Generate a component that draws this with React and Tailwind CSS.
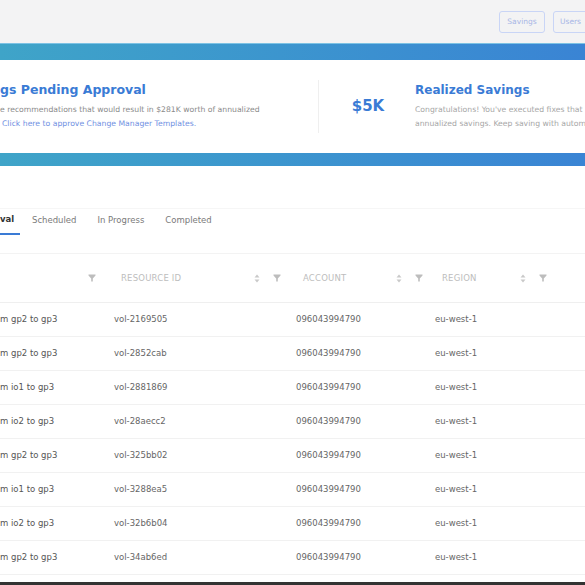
import React from "react";

const rows = [
  ["m gp2 to gp3", "vol-2169505"],
  ["m gp2 to gp3", "vol-2852cab"],
  ["m io1 to gp3", "vol-2881869"],
  ["m io2 to gp3", "vol-28aecc2"],
  ["m gp2 to gp3", "vol-325bb02"],
  ["m io1 to gp3", "vol-3288ea5"],
  ["m io2 to gp3", "vol-32b6b04"],
  ["m gp2 to gp3", "vol-34ab6ed"],
];

const SortIcon = () => (
  <svg width="6" height="9" viewBox="0 0 6 9" className="shrink-0">
    <path d="M3 0.5 L5.5 3.5 H0.5 Z" fill="#c9c9c9" />
    <path d="M3 8.5 L5.5 5.5 H0.5 Z" fill="#c9c9c9" />
  </svg>
);

const FilterIcon = () => (
  <svg width="8" height="8" viewBox="0 0 8 8" className="shrink-0">
    <path d="M0.5 0.5 H7.5 V1.6 L4.8 4.4 V7.5 H3.2 V4.4 L0.5 1.6 Z" fill="#bdbdbd" />
  </svg>
);

const HeaderCell = ({ label, width, sortAt, filterAt }) => (
  <div className={`flex items-center shrink-0 ${width}`}>
    <span className="pl-[7px] text-[8.5px] tracking-[0.2px] text-[#bdbdbd]">{label}</span>
    <div className={`${sortAt}`}><SortIcon /></div>
    <div className={`${filterAt}`}><FilterIcon /></div>
  </div>
);

export default function App() {
  return (
    <div className="w-[585px] h-[585px] overflow-hidden bg-white font-['DejaVu_Sans',sans-serif] flex flex-col">
      {/* top bar */}
      <div className="h-[43px] shrink-0 bg-[#f3f3f4] flex items-center pl-[499px] gap-[8px]">
        <div className="w-[46px] h-[22px] shrink-0 rounded-[3px] border border-[#c9d5f6] flex items-center justify-center text-[7.5px] text-[#a8b6e6]">
          Savings
        </div>
        <div className="w-[40px] h-[22px] shrink-0 rounded-[3px] border border-[#c9d5f6] flex items-center pl-[6px] text-[7.5px] text-[#a8b6e6]">
          Users
        </div>
      </div>

      {/* blue banner with card */}
      <div className="shrink-0 bg-gradient-to-r from-[#3fa4c8] to-[#3a84d4] border-t border-[#7cc2e4] pt-[16px] pb-[13px]">
        <div className="h-[93px] bg-white flex">
          <div className="w-[318px] shrink-0 pt-[23px]">
            <div className="text-[12.5px] font-semibold leading-[14px] text-[#3a7bd5]">gs Pending Approval</div>
            <div className="mt-[6px] text-[7.7px] leading-[14px] text-[#8a8a8a] whitespace-nowrap">
              e recommendations that would result in $281K worth of annualized
            </div>
            <div className="text-[7.7px] leading-[14px] text-[#6f8fe2] whitespace-nowrap pl-[2px]">
              Click here to approve Change Manager Templates.
            </div>
          </div>
          <div className="my-[20px] border-l border-[#efefef]" />
          <div className="w-[96px] shrink-0 flex items-center justify-center">
            <span className="text-[15px] font-bold text-[#3a7bd5] pl-[2px]">$5K</span>
          </div>
          <div className="pt-[23px] whitespace-nowrap overflow-hidden flex-1">
            <div className="text-[12px] font-semibold leading-[14px] text-[#3a7bd5]">Realized Savings</div>
            <div className="mt-[6px] text-[7.7px] leading-[14px] text-[#a6a6a6]">
              Congratulations! You've executed fixes that
            </div>
            <div className="text-[7.7px] leading-[14px] text-[#a6a6a6]">
              annualized savings. Keep saving with autom
            </div>
          </div>
        </div>
      </div>

      {/* tabs */}
      <div className="mt-[42px] border-t border-[#f6f6f6] shrink-0">
        <div className="flex items-end h-[26px] text-[8.5px]">
          <div className="w-[20px] border-b-[2px] border-[#3a7bd5] pb-[7px] text-[#333] font-semibold overflow-hidden whitespace-nowrap">
            val
          </div>
          <div className="ml-[12px] pb-[8px] text-[#7a7a7a]">Scheduled</div>
          <div className="ml-[21px] pb-[8px] text-[#7a7a7a]">In Progress</div>
          <div className="ml-[21px] pb-[8px] text-[#7a7a7a]">Completed</div>
        </div>
      </div>

      {/* table */}
      <div className="mt-[18px] border-t border-[#f3f3f3] shrink-0">
        <div className="h-[49px] flex items-center border-b border-[#efefef]">
          <div className="w-[114px] shrink-0 flex items-center pl-[88px]">
            <FilterIcon />
          </div>
          <HeaderCell label="RESOURCE ID" width="w-[182px]" sortAt="ml-[73px]" filterAt="ml-[13px]" />
          <HeaderCell label="ACCOUNT" width="w-[139px]" sortAt="ml-[50px]" filterAt="ml-[13px]" />
          <HeaderCell label="REGION" width="w-[150px]" sortAt="ml-[43px]" filterAt="ml-[13px]" />
        </div>
        {rows.map(([action, vol], i) => (
          <div key={i} className="h-[34px] flex items-center border-b border-[#f1f1f1] text-[8.5px] text-[#555]">
            <div className="w-[114px] shrink-0 whitespace-nowrap">{action}</div>
            <div className="w-[182px] shrink-0 text-[#666]">{vol}</div>
            <div className="w-[139px] shrink-0 text-[#666]">096043994790</div>
            <div className="w-[150px] shrink-0 text-[#666]">eu-west-1</div>
          </div>
        ))}
      </div>
      <div className="flex-1" />
      <div className="h-[3px] shrink-0 bg-[#333]" />
    </div>
  );
}
